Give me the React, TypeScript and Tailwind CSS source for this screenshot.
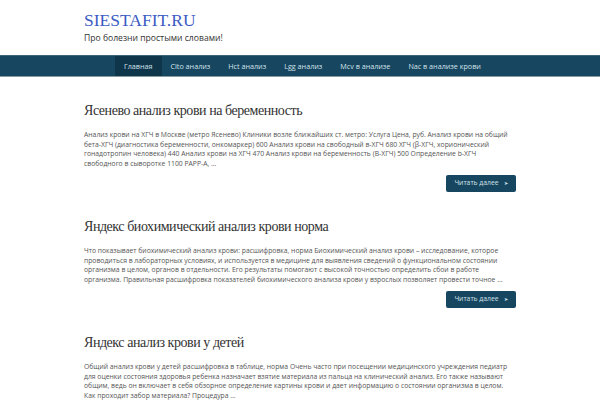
import React from "react";

const posts = [
  {
    title: "Ясенево анализ крови на беременность",
    text: "Анализ крови на ХГЧ в Москве (метро Ясенево) Клиники возле ближайших ст. метро: Услуга Цена, руб. Анализ крови на общий бета-ХГЧ (диагностика беременности, онкомаркер) 600 Анализ крови на свободный в-ХГЧ 680 ХГЧ (β-ХГЧ, хорионический гонадотропин человека) 440 Анализ крови на ХГЧ 470 Анализ крови на беременность (В-ХГЧ) 500 Определение b-ХГЧ свободного в сыворотке 1100 PAPP-A, …",
  },
  {
    title: "Яндекс биохимический анализ крови норма",
    text: "Что показывает биохимический анализ крови: расшифровка, норма Биохимический анализ крови – исследование, которое проводиться в лабораторных условиях, и используется в медицине для выявления сведений о функциональном состоянии организма в целом, органов в отдельности. Его результаты помогают с высокой точностью определить сбои в работе организма. Правильная расшифровка показателей биохимического анализа крови у взрослых позволяет провести точное …",
  },
  {
    title: "Яндекс анализ крови у детей",
    text: "Общий анализ крови у детей расшифровка в таблице, норма Очень часто при посещении медицинского учреждения педиатр для оценки состояния здоровья ребенка назначает взятие материала из пальца на клинический анализ. Его также называют общим, ведь он включает в себя обзорное определение картины крови и дает информацию о состоянии организма в целом. Как проходит забор материала? Процедура …",
  },
];

const nav = ["Главная", "Cito анализ", "Hct анализ", "Lgg анализ", "Mcv в анализе", "Nac в анализе крови"];

export default function App() {
  return (
    <div className="w-[600px] h-[400px] overflow-hidden bg-white" style={{ fontFamily: "'Open Sans', sans-serif" }}>
      <header className="w-[432px] mx-auto pt-[9px] h-[55px]">
        <div className="text-[17.5px] leading-[22px] text-[#3b5cc4]" style={{ fontFamily: "'Liberation Serif', serif" }}>
          SIESTAFIT.RU
        </div>
        <div className="text-[8.6px] leading-[12px] text-[#333] mt-[1px]">Про болезни простыми словами!</div>
      </header>
      <nav className="h-[22px] bg-[#164660] border-t border-t-[#3d6478] border-b border-b-[#8a9aa3]">
        <ul className="w-[432px] mx-auto flex h-full pl-[31px]">
          {nav.map((n, i) => (
            <li
              key={n}
              className={`h-full flex items-center whitespace-nowrap text-[7.2px] text-[#d4e2ea] px-[9px] ${i === 0 ? "bg-[#0f354a]" : ""}`}
            >
              {n}
            </li>
          ))}
        </ul>
      </nav>
      <main className="w-[432px] mx-auto pt-[24px]">
        {posts.map((p) => (
          <article key={p.title} className="mb-[25px]">
            <h2
              className="text-[14px] leading-[20px] tracking-[-0.45px] text-[#333]"
              style={{ fontFamily: "'Liberation Serif', serif" }}
            >
              {p.title}
            </h2>
            <p className="mt-[9px] text-[6.8px] leading-[9.5px] text-[#555]">{p.text}</p>
            <div className="flex justify-end mt-[7px]">
              <button className="h-[17px] w-[70px] bg-[#164660] rounded-[2px] text-[6.8px] text-[#d4e2ea] flex items-center justify-center gap-[5px]">
                Читать далее <span className="text-[5px]">➤</span>
              </button>
            </div>
          </article>
        ))}
      </main>
    </div>
  );
}
